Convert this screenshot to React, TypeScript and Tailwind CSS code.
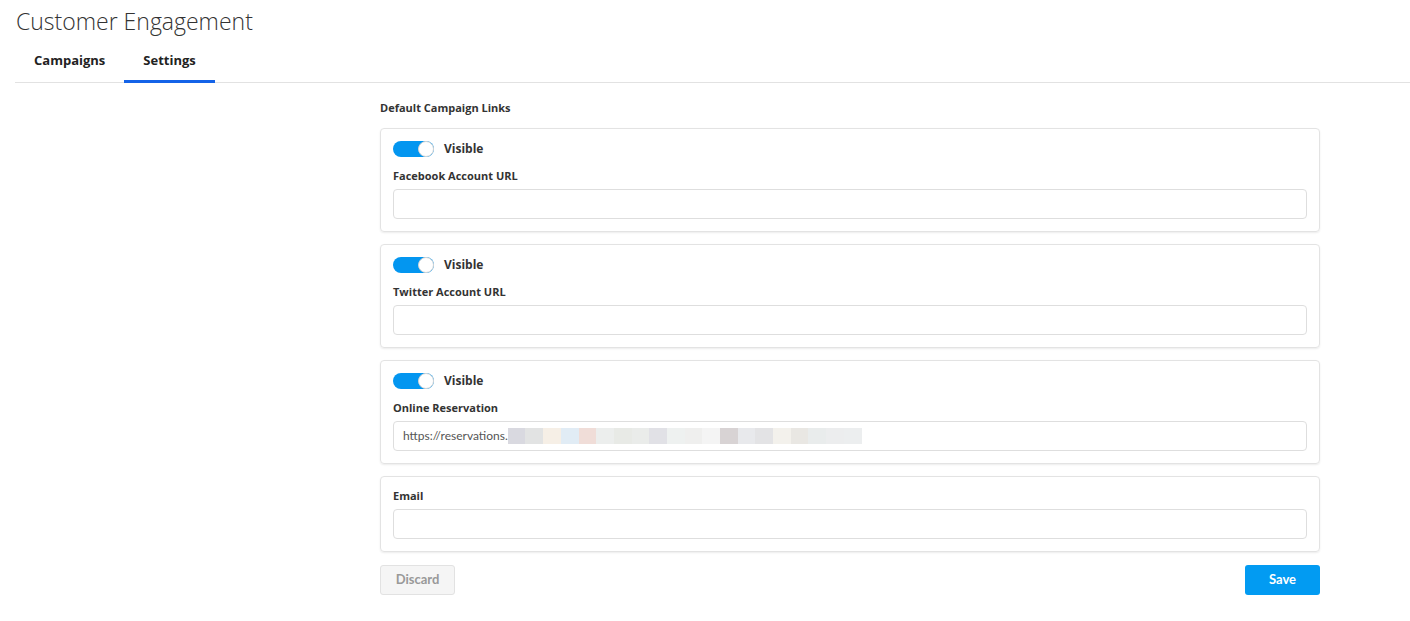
import React, { useState } from 'react';

const blurColors = [
    '#d9d9e0', '#e2e3e3', '#f6efe6', '#e1ecf5', '#f0ddd8', '#eceeed', '#e8eae6', '#eaecea',
    '#e1e1e6', '#eef1f0', '#efefee', '#f4f4f4', '#d8d3d4', '#e8e9ec', '#e3e3e5', '#f3f1ec',
    '#e9e7e3', '#e9ecec', '#ecedee', '#eceeef',
];

function Toggle({ on, onChange }: { on: boolean; onChange: () => void }) {
    return (
        <button
            onClick={onChange}
            className={`relative w-[41px] h-[16px] rounded-full ${on ? 'bg-[#0396f0]' : 'bg-[#cfd4da]'}`}
        >
            <span
                className={`absolute top-0 w-[16px] h-[16px] rounded-full bg-white border border-[#d5d5d5] ${on ? 'right-0' : 'left-0'}`}
            />
        </button>
    );
}

function LinkCard({ label, value, toggle = true }: { label: string; value?: React.ReactNode; toggle?: boolean }) {
    const [visible, setVisible] = useState(true);
    return (
        <div className={`border border-[#e3e3e3] rounded-[4px] shadow-[0_1px_2px_rgba(0,0,0,0.08)] px-[12px] pb-[12px] ${toggle ? 'pt-[12px]' : 'pt-[11px]'}`}>
            {toggle && (
                <div className="flex items-center gap-[10px] h-[16px] mb-[11px]">
                    <Toggle on={visible} onChange={() => setVisible(!visible)} />
                    <span className="text-[12px] font-bold text-[#333]">Visible</span>
                </div>
            )}
            <div className="text-[11px] font-bold text-[#333] h-[16px] leading-[16px]">{label}</div>
            <div className="mt-[5px] h-[30px] border border-[#dedede] rounded-[4px] flex items-center px-[9px] text-[12px] text-[#555] font-['Lato',sans-serif]">
                {value}
            </div>
        </div>
    );
}

export default function App() {
    const [tab, setTab] = useState('Settings');

    const reservation = (
        <span className="flex items-center">
            https://reservations.
            <span className="flex">
                {blurColors.map((c, i) => (
                    <span key={i} className="inline-block w-[17.7px] h-[16px]" style={{ background: c }} />
                ))}
            </span>
        </span>
    );

    return (
        <div className="w-[1410px] h-[621px] bg-white font-['Open_Sans','Lato',sans-serif] text-[#333]">
            <div className="pl-[16px] pt-[7px]">
                <h1 className="text-[23px] font-light text-[#333] leading-[28px]">Customer Engagement</h1>
            </div>
            <div className="ml-[15px] mt-[12px] flex border-b border-[#e2e2e2] h-[36px]">
                {['Campaigns', 'Settings'].map(t => (
                    <button
                        key={t}
                        onClick={() => setTab(t)}
                        className={`h-[36px] px-[19px] pb-[5px] text-[13px] font-bold text-[#222] border-b-[3px] -mb-px ${tab === t ? 'border-[#1463e8]' : 'border-transparent'}`}
                    >
                        {t}
                    </button>
                ))}
            </div>

            <div className="ml-[380px] w-[940px]">
                <div className="mt-[17px] text-[11px] font-bold text-[#333] leading-[16px]">Default Campaign Links</div>
                <div className="mt-[12px] flex flex-col gap-[12px]">
                    <LinkCard label="Facebook Account URL" />
                    <LinkCard label="Twitter Account URL" />
                    <LinkCard label="Online Reservation" value={reservation} />
                    <LinkCard label="Email" toggle={false} />
                </div>
                <div className="mt-[13px] flex justify-between font-['Lato',sans-serif]">
                    <button className="w-[75px] h-[30px] rounded-[3px] border border-[#e2e2e2] bg-[#f5f5f5] text-[13px] font-bold text-[#999]">
                        Discard
                    </button>
                    <button className="w-[75px] h-[30px] rounded-[3px] bg-[#029bf2] text-[13px] font-bold text-white">
                        Save
                    </button>
                </div>
            </div>
        </div>
    );
}
